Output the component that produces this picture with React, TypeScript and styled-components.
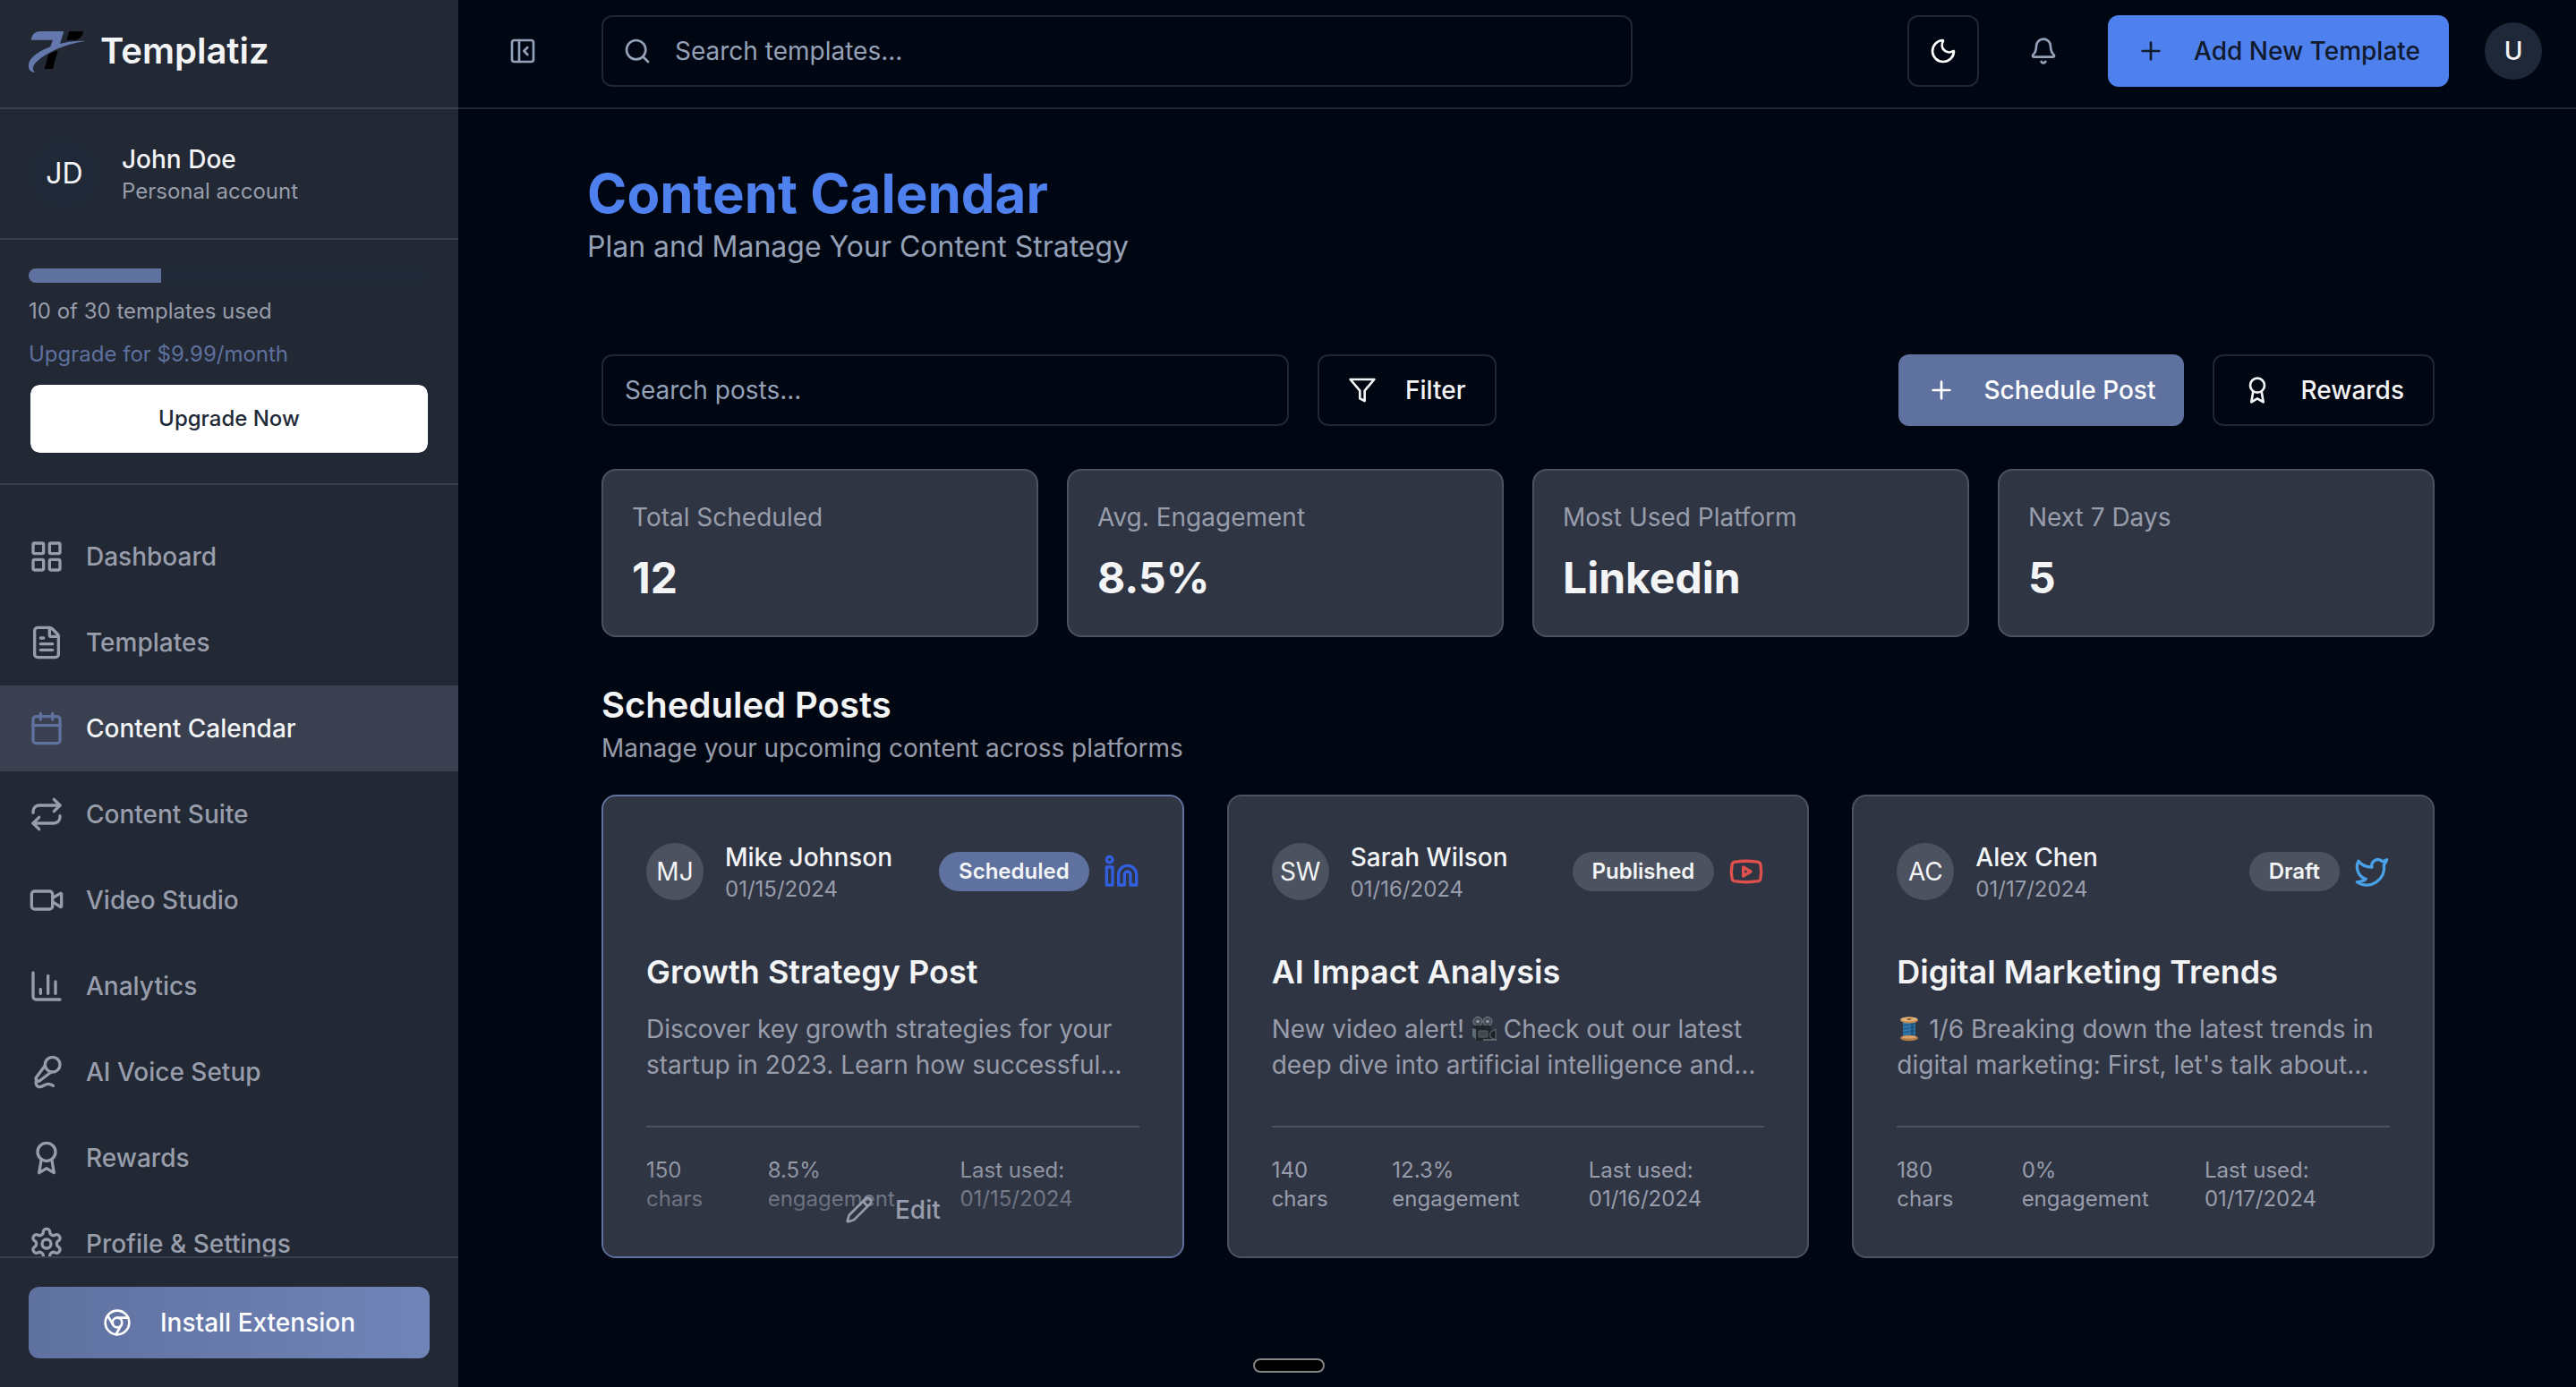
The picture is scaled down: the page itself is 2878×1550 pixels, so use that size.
import React from 'react';
import styled, { createGlobalStyle, css } from 'styled-components';
import {
  Bell,
  Calendar,
  ChartColumn,
  FileText,
  LayoutGrid,
  MicVocal,
  Moon,
  PanelLeftClose,
  Pencil,
  Plus,
  Repeat,
  Search,
  Video,
} from 'lucide-react';

const color = {
  page: '#010613',
  sidebar: '#222834',
  sidebarActive: '#3a404f',
  sidebarLine: '#3a404f',
  line: '#1e2637',
  card: '#303544',
  cardLine: '#4c525f',
  chip: '#4c525f',
  accent: '#5f719f',
  accentLight: '#7184b8',
  blue: '#4f81ee',
  text: '#f3f4f6',
  muted: '#989dab',
  slate: '#94a1b6',
};

const GlobalStyle = createGlobalStyle`
  *, *::before, *::after { box-sizing: border-box; }
  body {
    margin: 0;
    background: ${color.page};
    color: ${color.text};
    font-family: Inter, "Liberation Sans", sans-serif;
    font-size: 28px;
    line-height: 40px;
    -webkit-font-smoothing: antialiased;
  }
  h1, h2, h3, p { margin: 0; }
  button, input { font: inherit; }
  button { cursor: pointer; }
  a { color: inherit; text-decoration: none; }
  svg { flex-shrink: 0; }
`;

const Shell = styled.div`
  display: grid;
  grid-template-columns: 512px minmax(0, 1fr);
  min-height: 100vh;
`;

/* ---------- Sidebar ---------- */

const Sidebar = styled.aside`
  position: sticky;
  top: 0;
  display: flex;
  flex-direction: column;
  height: 100vh;
  background: ${color.sidebar};
`;

const Brand = styled.div`
  display: flex;
  align-items: center;
  gap: 16px;
  height: 122px;
  padding: 0 32px 6px;
  border-bottom: 2px solid ${color.sidebarLine};
  font-size: 40px;
  font-weight: 600;
`;

const Account = styled.div`
  display: flex;
  align-items: center;
  gap: 24px;
  padding: 32px;
  border-bottom: 2px solid ${color.sidebarLine};
`;

const Avatar = styled.span<{ $size: number; $bg: string; $font?: number; $weight?: number }>`
  display: flex;
  flex: none;
  align-items: center;
  justify-content: center;
  width: ${(p) => p.$size}px;
  height: ${(p) => p.$size}px;
  border-radius: 50%;
  background: ${(p) => p.$bg};
  color: ${color.text};
  font-size: ${(p) => p.$font ?? 28}px;
  font-weight: ${(p) => p.$weight ?? 400};
`;

const Name = styled.div`
  font-weight: 500;
  white-space: nowrap;
`;

const Small = styled.div`
  color: ${color.muted};
  font-size: 24px;
  line-height: 32px;
`;

const Plan = styled.section`
  display: flex;
  flex-direction: column;
  gap: 16px;
  padding: 32px;
  border-bottom: 2px solid ${color.sidebarLine};
`;

const Track = styled.div`
  height: 16px;
  overflow: hidden;
  border-radius: 8px;
  background: #202938;
`;

const Fill = styled.div`
  height: 100%;
  background: ${color.accent};
`;

const UpgradeLink = styled.a`
  color: ${color.accent};
  font-size: 24px;
  line-height: 32px;
`;

const UpgradeButton = styled.button`
  height: 80px;
  border: 2px solid ${color.sidebar};
  border-radius: 12px;
  background: #fff;
  background-clip: padding-box;
  color: #1f2937;
  font-size: 24px;
  font-weight: 500;
`;

const Nav = styled.nav`
  flex: 1;
  min-height: 0;
  padding: 32px 0;
  overflow: hidden;
`;

const NavItem = styled.a<{ $active?: boolean }>`
  display: flex;
  align-items: center;
  gap: 24px;
  height: 96px;
  padding: 0 32px;
  color: ${color.muted};
  font-weight: 500;
  ${(p) =>
    p.$active &&
    css`
      background: ${color.sidebarActive};
      color: ${color.text};
      svg { color: ${color.accent}; }
    `}
`;

const SidebarFooter = styled.div`
  padding: 32px;
  border-top: 2px solid ${color.sidebarLine};
`;

/* ---------- Buttons and fields ---------- */

const Button = styled.button<{ $tone: 'outline' | 'accent' | 'blue' | 'gradient'; $block?: boolean }>`
  display: flex;
  align-items: center;
  justify-content: center;
  gap: 32px;
  width: ${(p) => (p.$block ? '100%' : 'auto')};
  height: 80px;
  padding: 0 32px;
  border: 0;
  border-radius: 12px;
  color: ${color.text};
  font-weight: 500;
  white-space: nowrap;
  ${(p) => p.$tone === 'outline' && `background: transparent; border: 2px solid ${color.line};`}
  ${(p) => p.$tone === 'accent' && `background: ${color.accent}; color: #fff;`}
  ${(p) => p.$tone === 'blue' && `background: ${color.blue}; color: #111a2e;`}
  ${(p) =>
    p.$tone === 'gradient' &&
    `background: linear-gradient(to right, ${color.accent}, ${color.accentLight}); color: #fff;`}
`;

const IconButton = styled.button<{ $outlined?: boolean }>`
  display: flex;
  flex: none;
  align-items: center;
  justify-content: center;
  width: 80px;
  height: 80px;
  padding: 0;
  border: 2px solid ${(p) => (p.$outlined ? color.line : 'transparent')};
  border-radius: 12px;
  background: transparent;
  color: ${(p) => (p.$outlined ? '#fff' : color.slate)};
`;

const Field = styled.label<{ $wide?: boolean }>`
  display: flex;
  align-items: center;
  gap: 26px;
  width: ${(p) => (p.$wide ? '1152px' : '768px')};
  min-width: 0;
  height: 80px;
  padding: 0 ${(p) => (p.$wide ? '22px' : '24px')};
  border: 2px solid ${color.line};
  border-radius: 12px;
  color: ${color.slate};
`;

const FieldInput = styled.input`
  flex: 1;
  min-width: 0;
  padding: 0;
  border: 0;
  outline: 0;
  background: transparent;
  color: ${color.text};
  &::placeholder { color: ${color.slate}; opacity: 1; }
`;

/* ---------- Main area ---------- */

const Main = styled.main`
  min-width: 0;
`;

const TopBar = styled.header`
  display: flex;
  align-items: center;
  justify-content: space-between;
  gap: 48px;
  height: 122px;
  padding: 0 30px 6px 32px;
  border-bottom: 2px solid ${color.line};
`;

const TopGroup = styled.div<{ $gap: number }>`
  display: flex;
  align-items: center;
  gap: ${(p) => p.$gap}px;
  min-width: 0;
`;

const Page = styled.div`
  padding: 58px 142px 96px 144px;
`;

const PageTitle = styled.h1`
  color: ${color.blue};
  font-size: 60px;
  font-weight: 700;
  line-height: 72px;
`;

const PageSubtitle = styled.p`
  color: ${color.slate};
  font-size: 32px;
  line-height: 48px;
`;

const Body = styled.div`
  display: flex;
  flex-direction: column;
  gap: 48px;
  padding: 96px 16px 0;
`;

const Toolbar = styled.div`
  display: flex;
  justify-content: space-between;
  gap: 32px;
`;

const Stats = styled.section`
  display: grid;
  grid-template-columns: repeat(4, minmax(0, 1fr));
  gap: 32px;
`;

const StatCard = styled.div`
  display: flex;
  flex-direction: column;
  gap: 16px;
  padding: 32px;
  border: 2px solid ${color.cardLine};
  border-radius: 16px;
  background: ${color.card};
`;

const StatLabel = styled.div`
  color: ${color.muted};
`;

const StatValue = styled.div`
  font-size: 48px;
  font-weight: 700;
  line-height: 64px;
`;

const SectionTitle = styled.h2`
  font-size: 40px;
  font-weight: 600;
  line-height: 56px;
`;

const SectionText = styled.p`
  margin-bottom: 32px;
  color: ${color.muted};
`;

const Posts = styled.div`
  display: grid;
  grid-template-columns: repeat(3, minmax(0, 1fr));
  gap: 48px;
`;

const PostCard = styled.article<{ $hovered?: boolean }>`
  position: relative;
  padding: 48px;
  overflow: hidden;
  border: 2px solid ${(p) => (p.$hovered ? color.accent : color.cardLine)};
  border-radius: 16px;
  background: ${color.card};
`;

const PostHead = styled.div`
  display: flex;
  align-items: center;
  gap: 24px;
  margin-bottom: 48px;
`;

const PostMeta = styled.div`
  display: flex;
  align-items: center;
  gap: 16px;
  margin-left: auto;
`;

const Badge = styled.span<{ $accent?: boolean }>`
  padding: 6px 22px;
  border-radius: 22px;
  background: ${(p) => (p.$accent ? color.accent : color.chip)};
  font-size: 24px;
  font-weight: 600;
  line-height: 32px;
`;

const PostTitle = styled.h3`
  margin-bottom: 16px;
  font-size: 36px;
  font-weight: 600;
  line-height: 56px;
`;

const PostText = styled.p`
  display: -webkit-box;
  overflow: hidden;
  color: ${color.muted};
  -webkit-box-orient: vertical;
  -webkit-line-clamp: 2;
`;

const PostFacts = styled.div`
  display: flex;
  justify-content: space-between;
  gap: 48px;
  margin-top: 48px;
  padding-top: 32px;
  border-top: 2px solid ${color.cardLine};
`;

const EditOverlay = styled.div`
  position: absolute;
  right: 0;
  bottom: 0;
  left: 0;
  display: flex;
  justify-content: center;
  padding: 32px;
  background: linear-gradient(to top, ${color.card}, transparent);
`;

const EditButton = styled.button`
  display: flex;
  align-items: center;
  gap: 24px;
  padding: 0;
  border: 0;
  background: transparent;
  color: ${color.muted};
  font-weight: 500;
`;

const Emoji = styled.svg`
  width: 28px;
  height: 28px;
  vertical-align: -4px;
`;

const Handle = styled.div`
  position: fixed;
  bottom: 16px;
  left: 50%;
  width: 80px;
  height: 16px;
  margin-left: -39px;
  border: 2px solid #858585;
  border-radius: 8px;
  background: #000;
`;

/* ---------- Drawings ---------- */

type IconProps = { size?: number; color?: string };

const Stroked = ({ size = 32, color: stroke = 'currentColor', children }: IconProps & { children: React.ReactNode }) => (
  <svg
    width={size}
    height={size}
    viewBox="0 0 24 24"
    fill="none"
    stroke={stroke}
    strokeWidth="2"
    strokeLinecap="round"
    strokeLinejoin="round"
    aria-hidden="true"
  >
    {children}
  </svg>
);

const LogoMark = () => (
  <svg width="64" height="48" viewBox="24 24 192 144" aria-hidden="true">
    <path d="M33 59C33 43 45 30 62 30H142L126 82C115 86 104 91 92 96L105 59Z" fill="#6478ad" />
    <path d="M160 30H208C205 47 192 59 177 59H151Z" fill="#000" />
    <path d="M90 108C100 102 111 98 122 94L105 156H77Z" fill="#000" />
    <path
      d="M214 63C150 56 16 96 24 150C26 162 36 169 46 167C34 160 37 146 50 133C84 100 144 73 214 63Z"
      fill="#6478ad"
    />
  </svg>
);

const FilterIcon = (p: IconProps) => (
  <Stroked {...p}>
    <polygon points="22 3 2 3 10 12.46 10 19 14 21 14 12.46 22 3" />
  </Stroked>
);

const AwardIcon = (p: IconProps) => (
  <Stroked {...p}>
    <circle cx="12" cy="8" r="6" />
    <path d="M15.477 12.89 17 22l-5-3-5 3 1.523-9.11" />
  </Stroked>
);

const ChromeIcon = (p: IconProps) => (
  <Stroked {...p}>
    <circle cx="12" cy="12" r="10" />
    <circle cx="12" cy="12" r="4" />
    <path d="M21.17 8H12M3.95 6.06 8.54 14M10.88 21.94 15.46 14" />
  </Stroked>
);

const GearIcon = (p: IconProps) => (
  <Stroked {...p}>
    <path d="M12.22 2h-.44a2 2 0 0 0-2 2v.18a2 2 0 0 1-1 1.73l-.43.25a2 2 0 0 1-2 0l-.15-.08a2 2 0 0 0-2.73.73l-.22.38a2 2 0 0 0 .73 2.73l.15.1a2 2 0 0 1 1 1.72v.51a2 2 0 0 1-1 1.74l-.15.09a2 2 0 0 0-.73 2.73l.22.38a2 2 0 0 0 2.73.73l.15-.08a2 2 0 0 1 2 0l.43.25a2 2 0 0 1 1 1.73V20a2 2 0 0 0 2 2h.44a2 2 0 0 0 2-2v-.18a2 2 0 0 1 1-1.73l.43-.25a2 2 0 0 1 2 0l.15.08a2 2 0 0 0 2.73-.73l.22-.39a2 2 0 0 0-.73-2.73l-.15-.08a2 2 0 0 1-1-1.74v-.5a2 2 0 0 1 1-1.74l.15-.09a2 2 0 0 0 .73-2.73l-.22-.38a2 2 0 0 0-2.73-.73l-.15.08a2 2 0 0 1-2 0l-.43-.25a2 2 0 0 1-1-1.73V4a2 2 0 0 0-2-2z" />
    <circle cx="12" cy="12" r="3" />
  </Stroked>
);

const LinkedinIcon = () => (
  <Stroked size={40} color="#315fe0">
    <path d="M16 8a6 6 0 0 1 6 6v7h-4v-7a2 2 0 0 0-2-2 2 2 0 0 0-2 2v7h-4v-7a6 6 0 0 1 6-6z" />
    <rect width="4" height="12" x="2" y="9" />
    <circle cx="4" cy="4" r="2" />
  </Stroked>
);

const YoutubeIcon = () => (
  <Stroked size={40} color="#e0504c">
    <path d="M2.5 17a24.12 24.12 0 0 1 0-10 2 2 0 0 1 1.4-1.4 49.56 49.56 0 0 1 16.2 0A2 2 0 0 1 21.5 7a24.12 24.12 0 0 1 0 10 2 2 0 0 1-1.4 1.4 49.55 49.55 0 0 1-16.2 0A2 2 0 0 1 2.5 17" />
    <path d="m10 15 5-3-5-3z" />
  </Stroked>
);

const TwitterIcon = () => (
  <Stroked size={40} color="#4aa1e8">
    <path d="M22 4s-.7 2.1-2 3.4c1.6 10-9.4 17.3-18 11.6 2.2.1 4.4-.6 6-2C3 15.5.5 9.6 3 5c2.2 2.6 5.6 4.1 9 4-.9-4.2 4-6.6 7-3.8 1.1 0 3-1.2 3-1.2z" />
  </Stroked>
);

const CameraEmoji = () => (
  <Emoji viewBox="1 0 28 28" role="img" aria-label="movie camera">
    <circle cx="8" cy="5.5" r="5" fill="#474e55" stroke="#7b848b" />
    <circle cx="19" cy="5.5" r="5" fill="#474e55" stroke="#7b848b" />
    <circle cx="8" cy="5.5" r="1.8" fill="#8f989f" />
    <circle cx="19" cy="5.5" r="1.8" fill="#8f989f" />
    <path d="M2 12 5 10H21L23 13V27H6L2 23Z" fill="#22272c" />
    <path d="M2 13 6 14V26L2 22Z" fill="#5c6b7a" />
    <rect x="9" y="16" width="10" height="7" rx="1" fill="#3e464e" stroke="#5d666d" />
    <path d="M22 18 28 14V26L22 23Z" fill="#1b1f24" stroke="#69727a" />
    <path d="M14 26H29" stroke="#6b747b" strokeWidth="1.5" />
  </Emoji>
);

const ThreadEmoji = () => (
  <Emoji viewBox="1 0 28 28" role="img" aria-label="thread">
    <rect x="8" y="4" width="14" height="20" rx="1" fill="#246595" />
    <path d="M8 8 22 6M8 12 22 10M8 16 22 14M8 20 22 18" stroke="#3b86b8" />
    <rect x="17" y="5" width="3" height="18" fill="#17486f" opacity="0.6" />
    <ellipse cx="15" cy="24" rx="10" ry="3.2" fill="#b67c45" />
    <ellipse cx="15" cy="23" rx="8" ry="1.6" fill="#d9a56c" />
    <ellipse cx="15" cy="4" rx="10" ry="3.4" fill="#c48b52" />
    <ellipse cx="15" cy="3" rx="9.4" ry="2.4" fill="#deb27b" />
    <ellipse cx="15" cy="3" rx="2.6" ry="0.9" fill="#8b5a2c" />
  </Emoji>
);

/* ---------- Data ---------- */

const navItems = [
  { label: 'Dashboard', icon: LayoutGrid },
  { label: 'Templates', icon: FileText },
  { label: 'Content Calendar', icon: Calendar, active: true },
  { label: 'Content Suite', icon: Repeat },
  { label: 'Video Studio', icon: Video },
  { label: 'Analytics', icon: ChartColumn },
  { label: 'AI Voice Setup', icon: MicVocal },
  { label: 'Rewards', icon: AwardIcon },
  { label: 'Profile & Settings', icon: GearIcon },
];

const stats = [
  ['Total Scheduled', '12'],
  ['Avg. Engagement', '8.5%'],
  ['Most Used Platform', 'Linkedin'],
  ['Next 7 Days', '5'],
];

const posts = [
  {
    initials: 'MJ',
    name: 'Mike Johnson',
    date: '01/15/2024',
    status: 'Scheduled',
    icon: <LinkedinIcon />,
    title: 'Growth Strategy Post',
    text: <>Discover key growth strategies for your startup in 2023. Learn how successful…</>,
    facts: ['150 chars', '8.5% engagement', 'Last used: 01/15/2024'],
    hovered: true,
  },
  {
    initials: 'SW',
    name: 'Sarah Wilson',
    date: '01/16/2024',
    status: 'Published',
    icon: <YoutubeIcon />,
    title: 'AI Impact Analysis',
    text: (
      <>
        New video alert! <CameraEmoji /> Check out our latest deep dive into artificial intelligence and…
      </>
    ),
    facts: ['140 chars', '12.3% engagement', 'Last used: 01/16/2024'],
  },
  {
    initials: 'AC',
    name: 'Alex Chen',
    date: '01/17/2024',
    status: 'Draft',
    icon: <TwitterIcon />,
    title: 'Digital Marketing Trends',
    text: (
      <>
        <ThreadEmoji /> 1/6 Breaking down the latest trends in digital marketing: First, let's talk about…
      </>
    ),
    facts: ['180 chars', '0% engagement', 'Last used: 01/17/2024'],
  },
];

const usage = { used: 10, total: 30 };

export default function App() {
  return (
    <>
      <GlobalStyle />
      <Shell>
        <Sidebar>
          <Brand>
            <LogoMark />
            <span>Templatiz</span>
          </Brand>
          <Account>
            <Avatar $size={80} $bg="#202938" $font={32}>JD</Avatar>
            <div>
              <Name>John Doe</Name>
              <Small>Personal account</Small>
            </div>
          </Account>
          <Plan>
            <Track
              role="progressbar"
              aria-label="Templates used"
              aria-valuenow={usage.used}
              aria-valuemin={0}
              aria-valuemax={usage.total}
            >
              <Fill style={{ width: `${Math.floor((usage.used / usage.total) * 100)}%` }} />
            </Track>
            <Small>{usage.used} of {usage.total} templates used</Small>
            <UpgradeLink href="#upgrade">Upgrade for $9.99/month</UpgradeLink>
            <UpgradeButton type="button">Upgrade Now</UpgradeButton>
          </Plan>
          <Nav aria-label="Main">
            {navItems.map(({ label, icon: Icon, active }) => (
              <NavItem key={label} href="#" $active={active} aria-current={active ? 'page' : undefined}>
                <Icon size={40} />
                {label}
              </NavItem>
            ))}
          </Nav>
          <SidebarFooter>
            <Button type="button" $tone="gradient" $block>
              <ChromeIcon />
              Install Extension
            </Button>
          </SidebarFooter>
        </Sidebar>

        <Main>
          <TopBar>
            <TopGroup $gap={48}>
              <IconButton type="button" aria-label="Collapse sidebar">
                <PanelLeftClose size={32} />
              </IconButton>
              <Field $wide>
                <Search size={32} />
                <FieldInput type="search" placeholder="Search templates..." aria-label="Search templates" />
              </Field>
            </TopGroup>
            <TopGroup $gap={32}>
              <IconButton type="button" $outlined aria-label="Toggle theme">
                <Moon size={32} />
              </IconButton>
              <IconButton type="button" aria-label="Notifications">
                <Bell size={32} />
              </IconButton>
              <Button type="button" $tone="blue">
                <Plus size={32} />
                Add New Template
              </Button>
              <IconButton type="button" aria-label="User menu">
                <Avatar $size={64} $bg="#1f2838" $weight={500}>U</Avatar>
              </IconButton>
            </TopGroup>
          </TopBar>

          <Page>
            <PageTitle>Content Calendar</PageTitle>
            <PageSubtitle>Plan and Manage Your Content Strategy</PageSubtitle>
            <Body>
              <Toolbar>
                <TopGroup $gap={32}>
                  <Field>
                    <FieldInput type="search" placeholder="Search posts..." aria-label="Search posts" />
                  </Field>
                  <Button type="button" $tone="outline">
                    <FilterIcon />
                    Filter
                  </Button>
                </TopGroup>
                <TopGroup $gap={32}>
                  <Button type="button" $tone="accent">
                    <Plus size={32} />
                    Schedule Post
                  </Button>
                  <Button type="button" $tone="outline">
                    <AwardIcon />
                    Rewards
                  </Button>
                </TopGroup>
              </Toolbar>

              <Stats>
                {stats.map(([label, value]) => (
                  <StatCard key={label}>
                    <StatLabel>{label}</StatLabel>
                    <StatValue>{value}</StatValue>
                  </StatCard>
                ))}
              </Stats>

              <section>
                <SectionTitle>Scheduled Posts</SectionTitle>
                <SectionText>Manage your upcoming content across platforms</SectionText>
                <Posts>
                  {posts.map((post) => (
                    <PostCard key={post.name} $hovered={post.hovered}>
                      <PostHead>
                        <Avatar $size={64} $bg={color.chip}>{post.initials}</Avatar>
                        <div>
                          <Name>{post.name}</Name>
                          <Small>{post.date}</Small>
                        </div>
                        <PostMeta>
                          <Badge $accent={post.hovered}>{post.status}</Badge>
                          {post.icon}
                        </PostMeta>
                      </PostHead>
                      <PostTitle>{post.title}</PostTitle>
                      <PostText>{post.text}</PostText>
                      <PostFacts>
                        {post.facts.map((fact) => (
                          <Small key={fact}>{fact}</Small>
                        ))}
                      </PostFacts>
                      {post.hovered && (
                        <EditOverlay>
                          <EditButton type="button">
                            <Pencil size={32} />
                            Edit
                          </EditButton>
                        </EditOverlay>
                      )}
                    </PostCard>
                  ))}
                </Posts>
              </section>
            </Body>
          </Page>
        </Main>
      </Shell>
      <Handle />
    </>
  );
}
